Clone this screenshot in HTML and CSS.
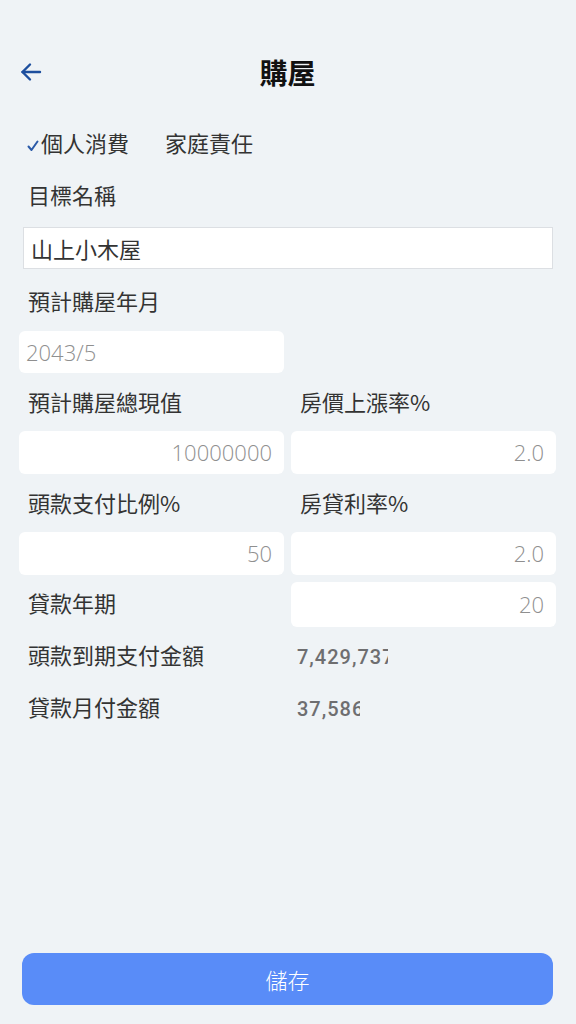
FILE: index.html
```html
<!DOCTYPE html>
<html lang="zh-Hant">
<head>
    <meta charset="UTF-8">
    <meta name="viewport" content="width=device-width, initial-scale=1.0">
    <title>購屋</title>
    <link rel="stylesheet" href="styles.css">
</head>
<body>
    <div class="page">
        <header class="top-bar">
            <a class="back" href="#">
                <svg width="24" height="24" viewBox="0 0 24 24" fill="none" stroke="#1d4f9e" stroke-width="2.4" stroke-linecap="round" stroke-linejoin="round">
                    <path d="M21 12H3.5"/>
                    <path d="M11 4.5L3.5 12l7.5 7.5"/>
                </svg>
            </a>
            <h1>購屋</h1>
            <span></span>
        </header>

        <div class="tabs">
            <span class="tab active">
                <svg width="12" height="12" viewBox="0 0 12 12" fill="none" stroke="#2a5aa8" stroke-width="2" stroke-linecap="round" stroke-linejoin="round">
                    <path d="M1.5 6.5l3 3.5L10.5 1.5"/>
                </svg>個人消費</span>
            <span class="tab">家庭責任</span>
        </div>

        <div class="label label-name">目標名稱</div>
        <div class="input name-input">山上小木屋</div>

        <div class="label label-date">預計購屋年月</div>
        <div class="grid">
            <div class="input date">2043/5</div>
        </div>

        <div class="grid labels">
            <div class="label">預計購屋總現值</div>
            <div class="label">房價上漲率%</div>
        </div>
        <div class="grid">
            <div class="input num">10000000</div>
            <div class="input num">2.0</div>
        </div>

        <div class="grid labels">
            <div class="label">頭款支付比例%</div>
            <div class="label">房貸利率%</div>
        </div>
        <div class="grid">
            <div class="input num">50</div>
            <div class="input num">2.0</div>
        </div>

        <div class="grid term-row">
            <div class="label">貸款年期</div>
            <div class="input num tall">20</div>
        </div>

        <div class="result first">
            <div class="label">頭款到期支付金額</div>
            <div class="value value-long">7,429,737</div>
        </div>
        <div class="result">
            <div class="label">貸款月付金額</div>
            <div class="value value-short">37,586</div>
        </div>

        <button class="save">儲存</button>
    </div>
</body>
</html>
```

FILE: styles.css
```css
body {
    margin: 0;
    background-color: #eff3f6;
    font-family: "Noto Sans CJK TC", "Noto Sans", sans-serif;
    color: #333333;
}

.page {
    display: flex;
    flex-direction: column;
    min-height: 1024px;
    box-sizing: border-box;
    padding: 47px 20px 19px 19px;
}

.top-bar {
    display: grid;
    grid-template-columns: 60px 1fr 60px;
    align-items: center;
    height: 50px;
}

.back {
    display: flex;
}

.top-bar h1 {
    margin: 0;
    text-align: center;
    font-size: 28px;
    font-weight: 700;
    color: #111111;
}

.tabs {
    display: flex;
    gap: 36px;
    margin-top: 30px;
    padding-left: 8px;
    font-size: 22px;
    line-height: 30px;
}

.tab svg {
    margin-right: 2px;
}

.label {
    font-size: 22px;
    line-height: 30px;
    padding: 0 0 6px 9px;
}

.label-name {
    margin-top: 22px;
}

.grid {
    display: grid;
    grid-template-columns: 1fr 1fr;
    column-gap: 7px;
}

.labels {
    margin-top: 13px;
}

.input {
    box-sizing: border-box;
    background-color: #ffffff;
    font-family: "Open Sans", "Noto Sans CJK TC", sans-serif;
    font-weight: 300;
    font-size: 22px;
    line-height: 42px;
    height: 42px;
    border-radius: 6px;
    padding: 0 12px 0 7px;
    color: #8f8f8f;
}

.name-input {
    margin: 12px 3px 0 4px;
    border: 1px solid #dcdfe3;
    border-radius: 0;
    line-height: 40px;
    font-family: "Noto Sans CJK TC", sans-serif;
    font-weight: 400;
    color: #333333;
}

.label-date {
    margin-top: 16px;
}

.label-date + .grid {
    margin-top: 10px;
}

.labels + .grid {
    margin-top: 9px;
}

.labels + .grid .input {
    height: 43px;
    line-height: 43px;
}

.num {
    text-align: right;
}

.term-row {
    margin-top: 7px;
    align-items: center;
}

.input.tall {
    height: 45px;
    line-height: 45px;
}

.result {
    display: flex;
    align-items: center;
    margin-top: 16px;
}

.result.first {
    margin-top: 12px;
}

.result .label {
    width: 269px;
}

.value {
    font-family: Roboto, "Noto Sans", sans-serif;
    font-weight: 500;
    font-size: 20px;
    letter-spacing: 1px;
    color: #6e6e70;
    white-space: nowrap;
    overflow: hidden;
}

.value-long {
    width: 91px;
}

.value-short {
    width: 63px;
}

.save {
    margin: auto 3px 0 3px;
    height: 52px;
    border: none;
    border-radius: 12px;
    background-color: #598cf8;
    color: #ffffff;
    font-family: "Noto Sans CJK TC", sans-serif;
    font-size: 22px;
    font-weight: 300;
    cursor: pointer;
}
```
